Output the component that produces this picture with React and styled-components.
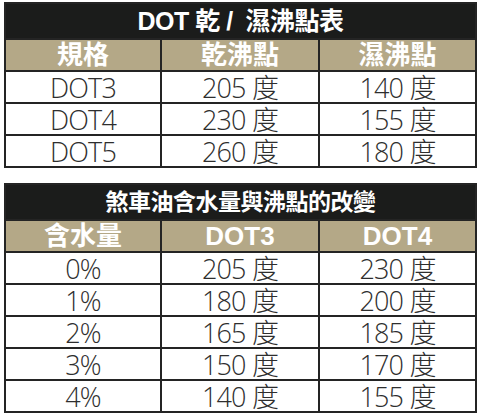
import React from 'react';
import styled, { createGlobalStyle } from 'styled-components';

const GlobalStyle = createGlobalStyle`
  *, *::before, *::after {
    box-sizing: border-box;
  }
  body {
    margin: 0;
    background: #fff;
    font-family: "Liberation Sans", "Noto Sans CJK TC", sans-serif;
  }
`;

const dryTable = {
  title: 'DOT 乾 /  濕沸點表',
  head: ['規格', '乾沸點', '濕沸點'],
  rows: [
    ['DOT3', '205 度', '140 度'],
    ['DOT4', '230 度', '155 度'],
    ['DOT5', '260 度', '180 度'],
  ],
};

const waterTable = {
  title: '煞車油含水量與沸點的改變',
  head: ['含水量', 'DOT3', 'DOT4'],
  rows: [
    ['0%', '205 度', '230 度'],
    ['1%', '180 度', '200 度'],
    ['2%', '165 度', '185 度'],
    ['3%', '150 度', '170 度'],
    ['4%', '140 度', '155 度'],
  ],
};

const Page = styled.div`
  display: flex;
  flex-direction: column;
  gap: 15px;
  padding: 2px 0 0 4px;
  width: 477px;
`;

const Table = styled.div`
  border: 2px solid #242424;
  background: #fff;
`;

const Title = styled.div`
  height: 36px;
  display: flex;
  align-items: center;
  justify-content: center;
  background: #1b1c1b;
  color: #fff;
  font-family: "Liberation Sans", "Noto Sans CJK TC", sans-serif;
  font-weight: 700;
  font-size: ${(p) => p.$size || 26}px;
  line-height: 1;
  letter-spacing: -0.5px;
  white-space: pre;
  border-bottom: 2px solid #242424;
`;

const Row = styled.div`
  display: grid;
  grid-template-columns: 156px 158px 1fr;
  height: 32px;
  border-bottom: 2px solid #242424;
  &:last-child {
    height: 30px;
    border-bottom: none;
  }
`;

const Cell = styled.div`
  display: flex;
  align-items: center;
  justify-content: center;
  line-height: 1;
  border-right: 2px solid #242424;
  background: ${(p) => (p.$head ? '#b4a887' : '#fff')};
  color: ${(p) => (p.$head ? '#fff' : '#2e2e2e')};
  font-family: ${(p) =>
    p.$head
      ? '"Liberation Sans", "Noto Sans CJK TC", sans-serif'
      : '"Open Sans", "Noto Sans CJK TC", sans-serif'};
  font-weight: ${(p) => (p.$head ? 700 : 300)};
  font-size: ${(p) => (p.$head ? 26 : 27)}px;
  letter-spacing: ${(p) => (p.$head ? '0' : '-0.8px')};
  &:last-child {
    border-right: none;
  }
`;

const DataTable = ({ data, titleSize }) => (
  <Table>
    <Title $size={titleSize}>{data.title}</Title>
    <Row>
      {data.head.map((h) => (
        <Cell key={h} $head>
          {h}
        </Cell>
      ))}
    </Row>
    {data.rows.map((r) => (
      <Row key={r[0]}>
        {r.map((c, i) => (
          <Cell key={i}>{c}</Cell>
        ))}
      </Row>
    ))}
  </Table>
);

export default function App() {
  return (
    <>
      <GlobalStyle />
      <Page>
        <DataTable data={dryTable} titleSize={25} />
        <DataTable data={waterTable} titleSize={23} />
      </Page>
    </>
  );
}
